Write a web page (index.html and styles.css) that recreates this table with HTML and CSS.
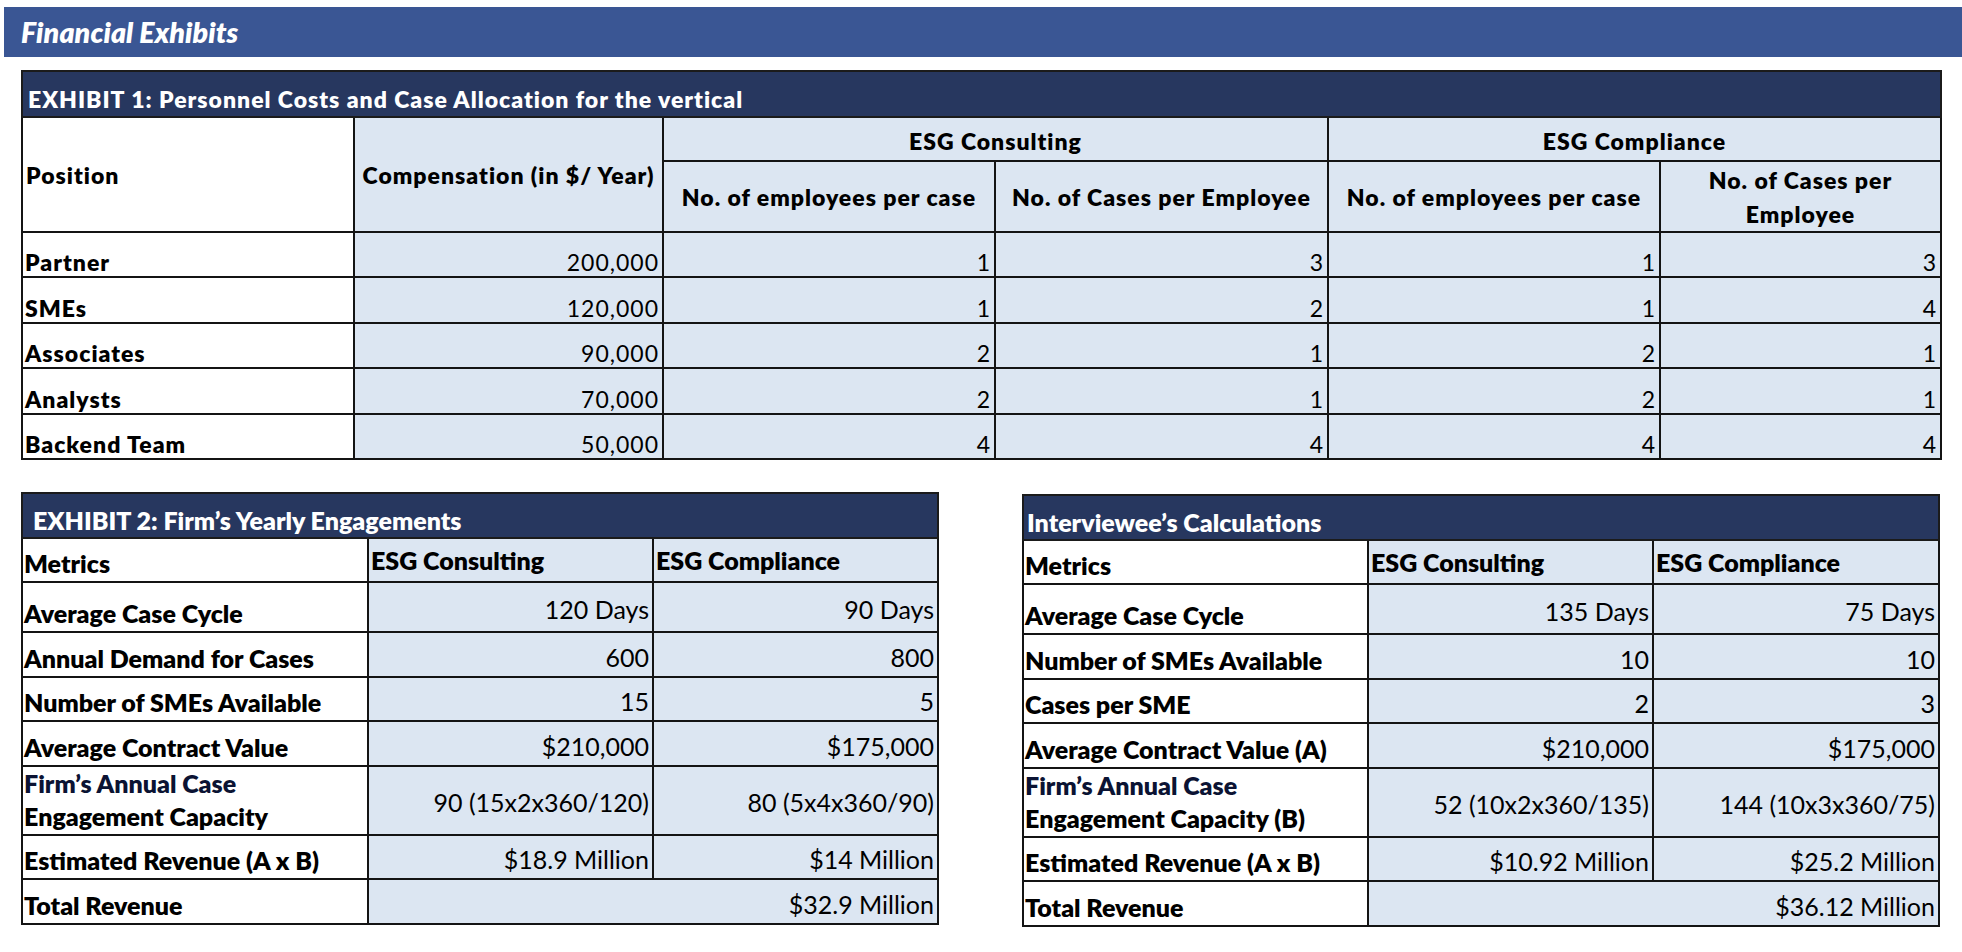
FILE: index.html
```html
<!DOCTYPE html>
<html lang="en">
<head>
<meta charset="utf-8">
<title>Financial Exhibits</title>
<link rel="stylesheet" href="styles.css">
</head>
<body>
<header class="banner"><h1>Financial Exhibits</h1></header>

<section class="ex1-wrap">
  <table class="ex1">
    <colgroup>
      <col class="w332"><col class="w309"><col class="w332"><col class="w333"><col class="w332"><col class="w281">
    </colgroup>
    <thead>
      <tr class="r-title"><th colspan="6" class="title">EXHIBIT 1: Personnel Costs and Case Allocation for the vertical</th></tr>
      <tr class="r-h1">
        <th rowspan="2" class="white left mid">Position</th>
        <th rowspan="2" class="mid">Compensation (in $/ Year)</th>
        <th colspan="2" class="mid grp">ESG Consulting</th>
        <th colspan="2" class="mid grp">ESG Compliance</th>
      </tr>
      <tr class="r-h2">
        <th class="mid">No. of employees per case</th>
        <th class="mid">No. of Cases per Employee</th>
        <th class="mid">No. of employees per case</th>
        <th class="mid">No. of Cases per<br>Employee</th>
      </tr>
    </thead>
    <tbody>
      <tr><th class="white left">Partner</th><td>200,000</td><td>1</td><td>3</td><td>1</td><td>3</td></tr>
      <tr><th class="white left">SMEs</th><td>120,000</td><td>1</td><td>2</td><td>1</td><td>4</td></tr>
      <tr><th class="white left">Associates</th><td>90,000</td><td>2</td><td>1</td><td>2</td><td>1</td></tr>
      <tr><th class="white left">Analysts</th><td>70,000</td><td>2</td><td>1</td><td>2</td><td>1</td></tr>
      <tr><th class="white left">Backend Team</th><td>50,000</td><td>4</td><td>4</td><td>4</td><td>4</td></tr>
    </tbody>
  </table>
</section>

<section class="lower">
  <table class="ex2">
    <colgroup><col class="w346"><col class="w285"><col class="w285"></colgroup>
    <thead>
      <tr class="r-title"><th colspan="3" class="title pad10">EXHIBIT 2: Firm’s Yearly Engagements</th></tr>
      <tr class="r-head">
        <th class="white lbl">Metrics</th>
        <th class="colh">ESG Consulting</th>
        <th class="colh">ESG Compliance</th>
      </tr>
    </thead>
    <tbody>
      <tr class="r50"><th class="white lbl">Average Case Cycle</th><td>120 Days</td><td>90 Days</td></tr>
      <tr><th class="white lbl">Annual Demand for Cases</th><td>600</td><td>800</td></tr>
      <tr><th class="white lbl">Number of SMEs Available</th><td>15</td><td>5</td></tr>
      <tr><th class="white lbl">Average Contract Value</th><td>$210,000</td><td>$175,000</td></tr>
      <tr class="r69"><th class="white lbl"><span class="navy">Firm’s Annual Case</span><br>Engagement Capacity</th><td>90 (15x2x360/120)</td><td>80 (5x4x360/90)</td></tr>
      <tr><th class="white lbl">Estimated Revenue (A x B)</th><td>$18.9 Million</td><td>$14 Million</td></tr>
      <tr><th class="white lbl">Total Revenue</th><td colspan="2">$32.9 Million</td></tr>
    </tbody>
  </table>

  <table class="ex2 ex3">
    <colgroup><col class="w345"><col class="w285"><col class="w286"></colgroup>
    <thead>
      <tr class="r-title"><th colspan="3" class="title pad3">Interviewee’s Calculations</th></tr>
      <tr class="r-head">
        <th class="white lbl">Metrics</th>
        <th class="colh">ESG Consulting</th>
        <th class="colh">ESG Compliance</th>
      </tr>
    </thead>
    <tbody>
      <tr class="r50"><th class="white lbl">Average Case Cycle</th><td>135 Days</td><td>75 Days</td></tr>
      <tr><th class="white lbl">Number of SMEs Available</th><td>10</td><td>10</td></tr>
      <tr><th class="white lbl">Cases per SME</th><td>2</td><td>3</td></tr>
      <tr><th class="white lbl">Average Contract Value (A)</th><td>$210,000</td><td>$175,000</td></tr>
      <tr class="r69"><th class="white lbl"><span class="navy">Firm’s Annual Case</span><br>Engagement Capacity (B)</th><td>52 (10x2x360/135)</td><td>144 (10x3x360/75)</td></tr>
      <tr><th class="white lbl">Estimated Revenue (A x B)</th><td>$10.92 Million</td><td>$25.2 Million</td></tr>
      <tr><th class="white lbl">Total Revenue</th><td colspan="2">$36.12 Million</td></tr>
    </tbody>
  </table>
</section>
</body>
</html>
```

FILE: styles.css
```css
* { box-sizing: border-box; }

html, body {
  margin: 0;
  padding: 0;
  background: #ffffff;
}

body {
  font-family: Lato, "Open Sans", "DejaVu Sans", sans-serif;
  color: #000;
}

.banner {
  margin: 7px 0 0 4px;
  height: 50px;
  background: #3a5694;
  display: flex;
  align-items: center;
  padding-left: 17px;
}

.banner h1 {
  margin: 0;
  font-size: 28.5px;
  font-weight: 800;
  font-style: italic;
  color: #fff;
  letter-spacing: 0.1px;
}

/* ---------- shared table rules ---------- */
table {
  border-collapse: collapse;
  table-layout: fixed;
}

th, td {
  border: 2px solid #141414;
  background: #dce6f2;
  padding: 0 3px;
  white-space: nowrap;
  overflow: hidden;
}

th { font-weight: 800; }
td { font-weight: 400; text-align: right; }

.white { background: #ffffff; }
.left { text-align: left; }

.title {
  background: #27375f;
  color: #fff;
  text-align: left;
  vertical-align: bottom;
  border-color: #1b1b1b;
}

/* ---------- exhibit 1 ---------- */
.ex1-wrap {
  padding-left: 21px;
  margin-top: 13px;
}

.ex1 {
  font-size: 23px;
  letter-spacing: 1px;
  line-height: 34px;
}

.ex1 .w332 { width: 332px; }
.ex1 .w309 { width: 309px; }
.ex1 .w333 { width: 333px; }
.ex1 .w281 { width: 281px; }

.ex1 .r-title { height: 46px; }
.ex1 .r-title .title { padding: 0 0 2px 5px; line-height: 30px; }
.ex1 .r-h1 { height: 44px; }
.ex1 .r-h2 { height: 71px; }
.ex1 tbody tr { height: 45.4px; }

.ex1 th.mid { vertical-align: middle; text-align: center; }
.ex1 th.mid.left { text-align: left; }
.ex1 th.grp { padding-top: 4px; }
.ex1 tbody th, .ex1 tbody td {
  vertical-align: bottom;
  padding-bottom: 1px;
  line-height: 26px;
}
.ex1 tbody th { padding-left: 2px; }

/* ---------- exhibits 2 & 3 ---------- */
.lower {
  display: flex;
  align-items: flex-start;
  gap: 83px;
  padding-left: 21px;
  margin-top: 32px;
}

.ex2 {
  font-size: 25px;
  line-height: 33px;
}

.ex3 { margin-top: 2px; }

.ex2 .w346 { width: 346px; }
.ex2 .w345 { width: 345px; }
.ex2 .w285 { width: 285px; }
.ex2 .w286 { width: 286px; }

.ex2 tr { height: 44.5px; }
.ex2 .r-title { height: 45px; }
.ex2 .r50 { height: 50px; }
.ex2 .r69 { height: 69px; }

.ex2 .title { padding-bottom: 2px; line-height: 30px; }
.ex2 .title.pad10 { padding-left: 10px; }
.ex2 .title.pad3 { padding-left: 3px; }

.ex2 .lbl {
  text-align: left;
  vertical-align: bottom;
  padding: 0 2px 1px 1px;
}

.ex2 .colh {
  text-align: left;
  vertical-align: bottom;
  padding: 0 2px 4px;
}

.ex2 td {
  vertical-align: middle;
  padding: 5px 3px 0;
}

.navy { color: #0b1333; }
```
